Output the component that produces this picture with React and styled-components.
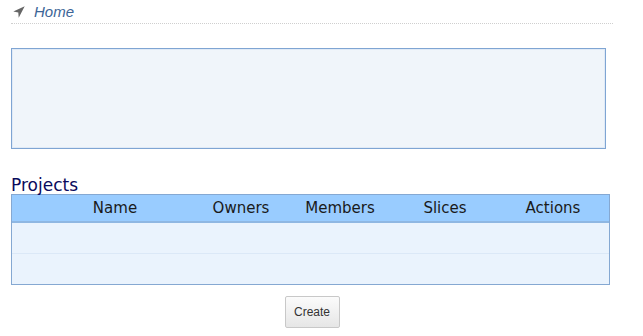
import React from "react";
import styled, { createGlobalStyle } from "styled-components";

const Global = createGlobalStyle`
  html, body { margin: 0; padding: 0; background: #fff; }
  body { font-family: "Liberation Sans", Arial, sans-serif; }
`;

const Page = styled.div`
  padding: 0 11px;
  width: 595px;
`;

const Breadcrumb = styled.div`
  display: flex;
  align-items: center;
  gap: 9px;
  height: 24px;
  padding-left: 2px;
  border-bottom: 1px dotted #cfcfcf;
  width: 602px;
  box-sizing: border-box;
`;

const Crumb = styled.a`
  font-family: "Liberation Sans", Arial, sans-serif;
  font-style: italic;
  font-size: 15px;
  color: #3d6597;
  text-decoration: none;
  margin-top: -1px;
`;

const InfoBox = styled.div`
  margin-top: 24px;
  height: 99px;
  border: 1px solid #7fa5d3;
  box-shadow: inset 0 0 0 1px #e0eaf6;
  background: #f0f5fa;
`;

const Heading = styled.h2`
  margin: 27px 0 0;
  font-family: "DejaVu Sans", Verdana, sans-serif;
  font-weight: normal;
  font-size: 17px;
  line-height: 18px;
  color: #0a0a5c;
`;

const Table = styled.div`
  width: 599px;
  border: 1px solid #85a8d2;
  box-sizing: border-box;
`;

const Row = styled.div`
  display: grid;
  grid-template-columns: 183px 92px 106px 104px 1fr;
  height: ${(p) => p.$h}px;
  background: ${(p) => (p.$head ? "#99ccff" : "#eaf3fd")};
  border-bottom: ${(p) => (p.$last ? "none" : p.$head ? "2px solid #8fb7e2" : "1px solid #dbe8f7")};
  box-sizing: border-box;
`;

const HeadCell = styled.div`
  display: flex;
  align-items: center;
  justify-content: center;
  padding-left: ${(p) => p.$pl || 0}px;
  font-family: "DejaVu Sans", Verdana, sans-serif;
  font-size: 15px;
  color: #1a1a1a;
  white-space: nowrap;
`;

const Actions = styled.div`
  display: flex;
  justify-content: center;
  width: 599px;
  margin-top: 11px;
`;

const Button = styled.button`
  width: 55px;
  height: 32px;
  font-family: "Liberation Sans", Arial, sans-serif;
  font-size: 12px;
  color: #333;
  border: 1px solid #c8c8c8;
  border-radius: 2px;
  background: linear-gradient(#fbfbfb, #e6e6e6);
  padding: 0;
  margin-left: 3px;
`;

const NavIcon = () => (
  <svg width="12" height="12" viewBox="0 0 12 12">
    <polygon points="0.3,5.4 11.7,0.3 5.7,11.7 5.3,6.6" fill="#666" />
  </svg>
);

export default function App() {
  return (
    <Page>
      <Global />
      <Breadcrumb>
        <NavIcon />
        <Crumb href="#">Home</Crumb>
      </Breadcrumb>
      <InfoBox />
      <Heading>Projects</Heading>
      <Table>
        <Row $head $h={28}>
          <HeadCell $pl={23}>Name</HeadCell>
          <HeadCell>Owners</HeadCell>
          <HeadCell>Members</HeadCell>
          <HeadCell>Slices</HeadCell>
          <HeadCell>Actions</HeadCell>
        </Row>
        <Row $h={31}>
          <div /><div /><div /><div /><div />
        </Row>
        <Row $h={30} $last>
          <div /><div /><div /><div /><div />
        </Row>
      </Table>
      <Actions>
        <Button>Create</Button>
      </Actions>
    </Page>
  );
}
